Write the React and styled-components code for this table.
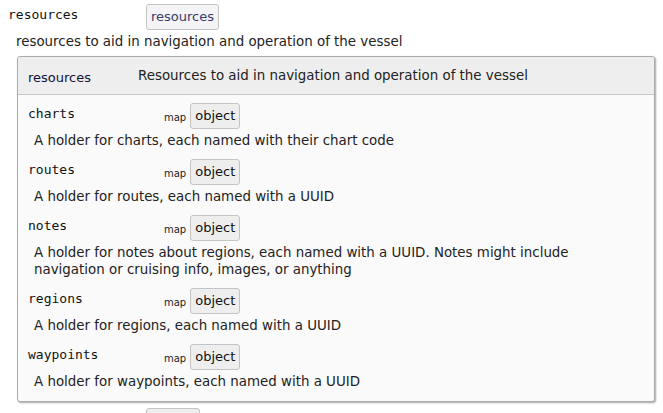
import React from "react";
import styled, { createGlobalStyle } from "styled-components";

const GlobalStyle = createGlobalStyle`
  html, body {
    margin: 0;
    padding: 0;
    background: #ffffff;
    font-family: "DejaVu Sans", Verdana, sans-serif;
    font-size: 13px;
    color: #222;
  }
`;

const Page = styled.div`
  padding: 4px 8px 0 8px;
  overflow: hidden;
  height: 413px;
  box-sizing: border-box;
`;

const PropRow = styled.div`
  display: flex;
  align-items: center;
  height: 26px;
  margin-top: ${(p) => p.$gap || 0}px;
`;

const PropName = styled.span`
  font-family: "DejaVu Sans Mono", "Liberation Mono", monospace;
  font-size: 13px;
  color: #111;
  width: ${(p) => p.$width || 138}px;
  flex-shrink: 0;
  align-self: flex-start;
  line-height: 22px;
`;

const MapTag = styled.span`
  font-size: 10px;
  color: #222;
  margin-right: 4px;
  padding-top: 3px;
`;

const TypeButton = styled.span`
  display: inline-block;
  box-sizing: border-box;
  height: 26px;
  min-width: ${(p) => p.$minWidth || 0}px;
  line-height: 24px;
  padding: 0 4px;
  background: ${(p) => (p.$ref ? "#f4f4f6" : "#eeeeee")};
  border: 1px solid #c4c4c4;
  border-radius: 3px;
  color: ${(p) => (p.$ref ? "#3a3a6a" : "#111")};
  font-size: 13px;
`;

const Detail = styled.div`
  margin-left: 8px;
`;

const TopDesc = styled.div`
  font-size: 13.4px;
  line-height: 17px;
  margin-top: 3px;
`;

const Panel = styled.div`
  margin: 6px 0 0 1px;
  border: 1px solid #aaaaaa;
  border-radius: 3px;
  box-shadow: 1px 1px 2px rgba(0, 0, 0, 0.35);
  background: #fafafa;
`;

const PanelHeader = styled.div`
  display: flex;
  align-items: center;
  height: 37px;
  padding: 0 10px;
  background: #eeeeee;
  border-bottom: 1px solid #c8c8c8;
  border-radius: 3px 3px 0 0;
`;

const HeaderName = styled.span`
  width: 110px;
  color: #10103a;
  padding-top: 4px;
`;

const HeaderTitle = styled.span`
  color: #222;
  font-size: 13.4px;
`;

const PanelBody = styled.div`
  padding: 8px 30px 11px 10px;
  display: flex;
  flex-direction: column;
  gap: 10px;
`;

const Field = styled.div``;

const FieldDesc = styled.div`
  margin: 3px 0 0 6px;
  font-size: 13.4px;
  line-height: 17px;
`;

const fields = [
  { name: "charts", desc: "A holder for charts, each named with their chart code" },
  { name: "routes", desc: "A holder for routes, each named with a UUID" },
  {
    name: "notes",
    desc: "A holder for notes about regions, each named with a UUID. Notes might include navigation or cruising info, images, or anything",
  },
  { name: "regions", desc: "A holder for regions, each named with a UUID" },
  { name: "waypoints", desc: "A holder for waypoints, each named with a UUID" },
];

export default function App() {
  return (
    <>
      <GlobalStyle />
      <Page>
        <PropRow>
          <PropName>resources</PropName>
          <TypeButton $ref>resources</TypeButton>
        </PropRow>
        <Detail>
          <TopDesc>resources to aid in navigation and operation of the vessel</TopDesc>
          <Panel>
            <PanelHeader>
              <HeaderName>resources</HeaderName>
              <HeaderTitle>Resources to aid in navigation and operation of the vessel</HeaderTitle>
            </PanelHeader>
            <PanelBody>
              {fields.map((f) => (
                <Field key={f.name}>
                  <PropRow>
                    <PropName $width={136}>{f.name}</PropName>
                    <MapTag>map</MapTag>
                    <TypeButton>object</TypeButton>
                  </PropRow>
                  <FieldDesc>{f.desc}</FieldDesc>
                </Field>
              ))}
            </PanelBody>
          </Panel>
        </Detail>
        <PropRow $gap={6}>
          <PropName />
          <TypeButton $minWidth={54} />
        </PropRow>
      </Page>
    </>
  );
}
